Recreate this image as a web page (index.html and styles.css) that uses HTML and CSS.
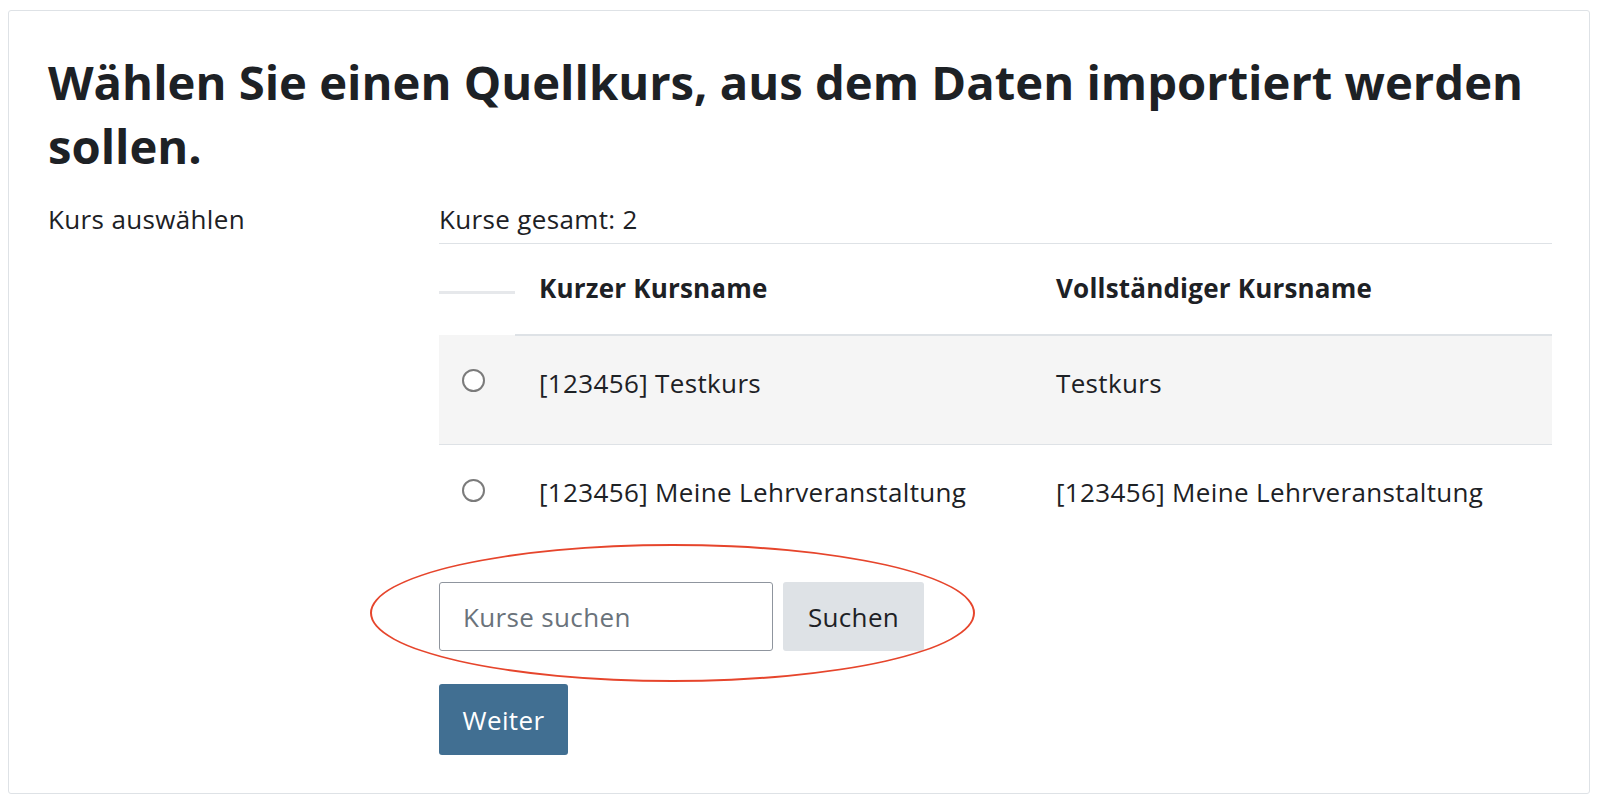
FILE: index.html
```html
<!DOCTYPE html>
<html lang="de">
<head>
<meta charset="utf-8">
<title>Quellkurs wählen</title>
<link rel="stylesheet" href="styles.css">
</head>
<body>
<div class="card">
  <h2 class="title">Wählen Sie einen Quellkurs, aus dem Daten importiert werden sollen.</h2>
  <div class="form-row">
    <div class="label">Kurs auswählen</div>
    <div class="content">
      <div class="caption">Kurse gesamt: 2</div>
      <table class="courses">
        <colgroup>
          <col class="c1"><col class="c2"><col class="c3">
        </colgroup>
        <thead>
          <tr>
            <th class="sel"><span class="mark"></span></th>
            <th>Kurzer Kursname</th>
            <th>Vollständiger Kursname</th>
          </tr>
        </thead>
        <tbody>
          <tr class="odd">
            <td class="sel"><input type="radio" name="course" class="radio"></td>
            <td>[123456] Testkurs</td>
            <td>Testkurs</td>
          </tr>
          <tr>
            <td class="sel"><input type="radio" name="course" class="radio"></td>
            <td>[123456] Meine Lehrveranstaltung</td>
            <td>[123456] Meine Lehrveranstaltung</td>
          </tr>
        </tbody>
      </table>
      <div class="search">
        <input type="text" class="search-input" placeholder="Kurse suchen">
        <button class="btn btn-secondary" type="button">Suchen</button>
        <div class="ring"></div>
      </div>
      <div class="actions">
        <button class="btn btn-primary" type="button">Weiter</button>
      </div>
    </div>
  </div>
</div>
</body>
</html>
```
FILE: styles.css
```css
* { box-sizing: border-box; }
html, body { margin: 0; padding: 0; background: #fff; }
body {
  font-family: "Open Sans", "Liberation Sans", sans-serif;
  font-size: 26px;
  letter-spacing: 0.35px;
  line-height: 1.5;
  color: #1d2125;
}
.card {
  margin: 10px 0 0 8px;
  width: 1582px;
  border: 1px solid #dee2e6;
  border-radius: 3px;
  padding: 39px 37px 38px 39px;
}
.title {
  margin: 0 0 22px 0;
  font-size: 47.2px;
  letter-spacing: 0;
  line-height: 64px;
  font-weight: 700;
  color: #1d2125;
}
.form-row {
  display: grid;
  grid-template-columns: 391px 1fr;
}
.label { line-height: 39px; }
.caption { line-height: 39px; padding-bottom: 4px; }
.courses {
  width: 100%;
  border-collapse: collapse;
  table-layout: fixed;
  border-top: 1px solid #dee2e6;
}
.c1 { width: 76px; }
.c2 { width: 517px; }
.courses th {
  text-align: left;
  font-weight: 700;
  letter-spacing: 0.2px;
  padding: 26px 24px 27px 24px;
  line-height: 37px;
  border-bottom: 2px solid #dee2e6;
}
.courses th.sel { border-bottom: none; padding: 0; vertical-align: middle; }
.mark { display: block; height: 3px; margin-top: 6px; background: #e6e8eb; }
.courses td {
  padding: 29px 24px 42px 24px;
  line-height: 37px;
  vertical-align: top;
}
.courses tr.odd td { background: #f5f5f5; border-bottom: 1px solid #dee2e6; }
.courses td.sel { padding-left: 23px; padding-right: 0; }
.radio {
  appearance: none;
  -webkit-appearance: none;
  margin: 5px 0 0 0;
  width: 23px;
  height: 23px;
  border: 2px solid #7b7b7b;
  border-radius: 50%;
  background: #fff;
  display: block;
}
.search {
  position: relative;
  display: flex;
  gap: 10px;
  margin-top: 29px;
}
.search-input {
  width: 334px;
  height: 69px;
  border: 1px solid #8f959e;
  border-radius: 3px;
  padding: 0 23px;
  font-family: inherit;
  font-size: 26px;
  letter-spacing: 0.35px;
  color: #1d2125;
}
.search-input::placeholder { color: #6a737b; }
.btn {
  font-family: inherit;
  font-size: 26px;
  letter-spacing: 0.35px;
  border: none;
  border-radius: 3px;
  height: 69px;
  padding: 0;
  cursor: pointer;
}
.btn-secondary { background: #dee2e6; color: #1d2125; width: 141px; }
.btn-primary { background: #416f92; color: #fff; width: 129px; height: 71px; }
.actions { margin-top: 33px; }
.ring {
  position: absolute;
  left: -69px;
  top: -38px;
  width: 605px;
  height: 138px;
  border: 2.7px solid #e6452c;
  border-radius: 50%;
  pointer-events: none;
}
```
